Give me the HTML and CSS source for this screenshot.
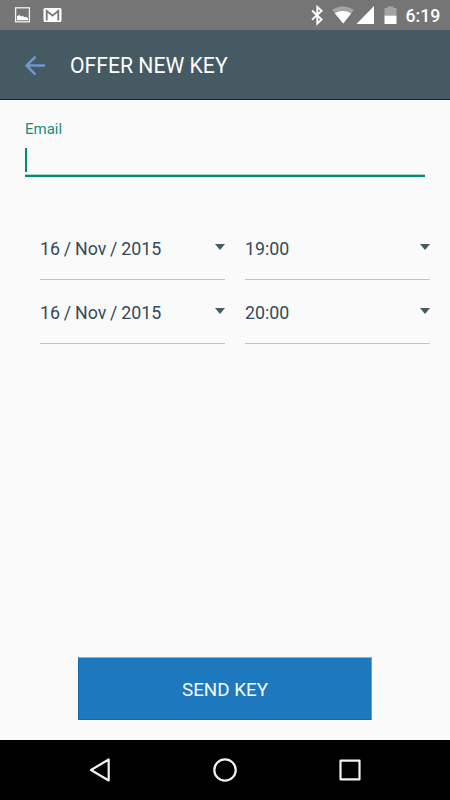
FILE: index.html
```html
<!DOCTYPE html>
<html lang="en">
<head>
<meta charset="utf-8">
<title>Offer new key</title>
<link rel="stylesheet" href="styles.css">
</head>
<body>
<div class="screen">
  <div class="status">
    <svg width="310" height="30" viewBox="0 0 310 30" aria-hidden="true">
      <rect x="15.600" y="7.800" width="13.800" height="14" fill="none" stroke="#f2f2f2" stroke-width="1.300"/>
      <path d="M17 20.200v-4l2.200-1.200 1.800 1.500 1.500-.8 2 1.500 1.500-.5 2 1.500v2z" fill="#fff"/>
      <rect x="43.500" y="8" width="18" height="14" rx="1.500" fill="#fff"/>
      <path d="M46.700 20.500V10.800l5.800 4.800 5.800-4.800v9.700" fill="none" stroke="#757575" stroke-width="1.800"/>
    </svg>
    <svg width="95" height="30" viewBox="310 0 95 30" aria-hidden="true">
      <path d="M312 10.500l9.600 9-4.300 4V6.800l4.300 3.900-9.600 9" fill="none" stroke="#fff" stroke-width="1.900"/>
      <path d="M332 9.800Q343 2.500 354 9.800L343.200 23.500z" fill="#a3a3a3"/>
      <path d="M334.800 13.300Q343 8.500 351.300 13.300L343.200 23.500z" fill="#fff"/>
      <path d="M374 6v18h-17.500z" fill="#fff"/>
      <path d="M384.500 8h3V6.200h6V8h3v8h-12z" fill="#a3a3a3"/>
      <path d="M384.500 15.700h12V24h-12z" fill="#fff"/>
    </svg>
    <span class="clock">6:19</span>
  </div>
  <header class="header">
    <svg class="back" width="22" height="22" viewBox="0 0 22 22" aria-hidden="true"><path d="M10.800 2.300L2.500 10.600l8.300 8.300M2.500 10.600H20" fill="none" stroke="#6f9bcb" stroke-width="2.500" stroke-linecap="round" stroke-linejoin="round"/></svg>
    <h1 class="title">OFFER NEW KEY</h1>
  </header>
  <main class="main">
    <div class="email">
      <div class="label">Email</div>
      <div class="input"><span class="caret"></span></div>
    </div>
    <div class="grid">
      <div class="select"><span class="date">16 / Nov / 2015</span><svg width="10" height="6" viewBox="0 0 10 6"><path d="M0 0h10L5 6z"/></svg></div>
      <div class="select"><span>19:00</span><svg width="10" height="6" viewBox="0 0 10 6"><path d="M0 0h10L5 6z"/></svg></div>
      <div class="select"><span class="date">16 / Nov / 2015</span><svg width="10" height="6" viewBox="0 0 10 6"><path d="M0 0h10L5 6z"/></svg></div>
      <div class="select"><span>20:00</span><svg width="10" height="6" viewBox="0 0 10 6"><path d="M0 0h10L5 6z"/></svg></div>
    </div>
    <button class="send">SEND KEY</button>
  </main>
  <nav class="nav">
    <svg width="450" height="60" viewBox="0 0 450 60" fill="none" stroke="#f2f2f2" stroke-width="2.200" stroke-linejoin="round" aria-hidden="true">
      <path d="M108.700 19.500v21L91 30z"/>
      <circle cx="225" cy="30" r="10.700"/>
      <rect x="340.500" y="20.700" width="19" height="18.600"/>
    </svg>
  </nav>
</div>
</body>
</html>
```
FILE: styles.css
```css
* { box-sizing: border-box; }
body { margin: 0; font-family: Roboto, "Liberation Sans", sans-serif; }
svg { display: block; flex: none; }
.screen { width: 450px; height: 800px; display: flex; flex-direction: column; background: #fafafa; overflow: hidden; }
.status { height: 30px; flex: none; display: flex; background: #757575; }
.clock { margin-left: 0.5px; color: #fff; font-size: 17.7px; line-height: 32px; font-weight: 500; }
.header { height: 70px; flex: none; display: flex; align-items: center; padding-left: 24px; background: #465a64; border-bottom: 1px solid #0c2334; }
.back { margin-top: 2px; }
.title { margin: 3px 0 0 24px; font-size: 21.2px; line-height: 26px; font-weight: 400; color: #fff; }
.main { flex: 1; display: flex; flex-direction: column; }
.email { margin: 19px 25px 0; }
.label { font-size: 15px; line-height: 20px; color: #148f7c; }
.input { height: 38px; padding-top: 9px; border-bottom: 2px solid #008b77; box-shadow: inset 0 -1px #a8d5ce; }
.caret { display: block; width: 2.4px; height: 24px; background: #008b77; }
.grid { display: grid; grid-template-columns: 185px 185px; column-gap: 20px; margin: 39px 0 0 40px; }
.select { height: 64px; padding-top: 21px; display: flex; justify-content: space-between; border-bottom: 1px solid #c2c2c2; color: #34495a; font-size: 17.8px; line-height: 24px; }
.date { word-spacing: -0.6px; }
.select svg { margin-top: 7px; fill: #465a64; }
.send { width: 294px; height: 63px; margin: auto 0 20px 78px; padding: 2px 0 0; border: 1px solid #126bb1; border-top-color: #8ab4da; border-right-color: #669fd0; background: #1d78be; color: #f5faff; font: 400 18.8px Roboto, sans-serif; }
.nav { height: 60px; flex: none; background: #000; }
```
